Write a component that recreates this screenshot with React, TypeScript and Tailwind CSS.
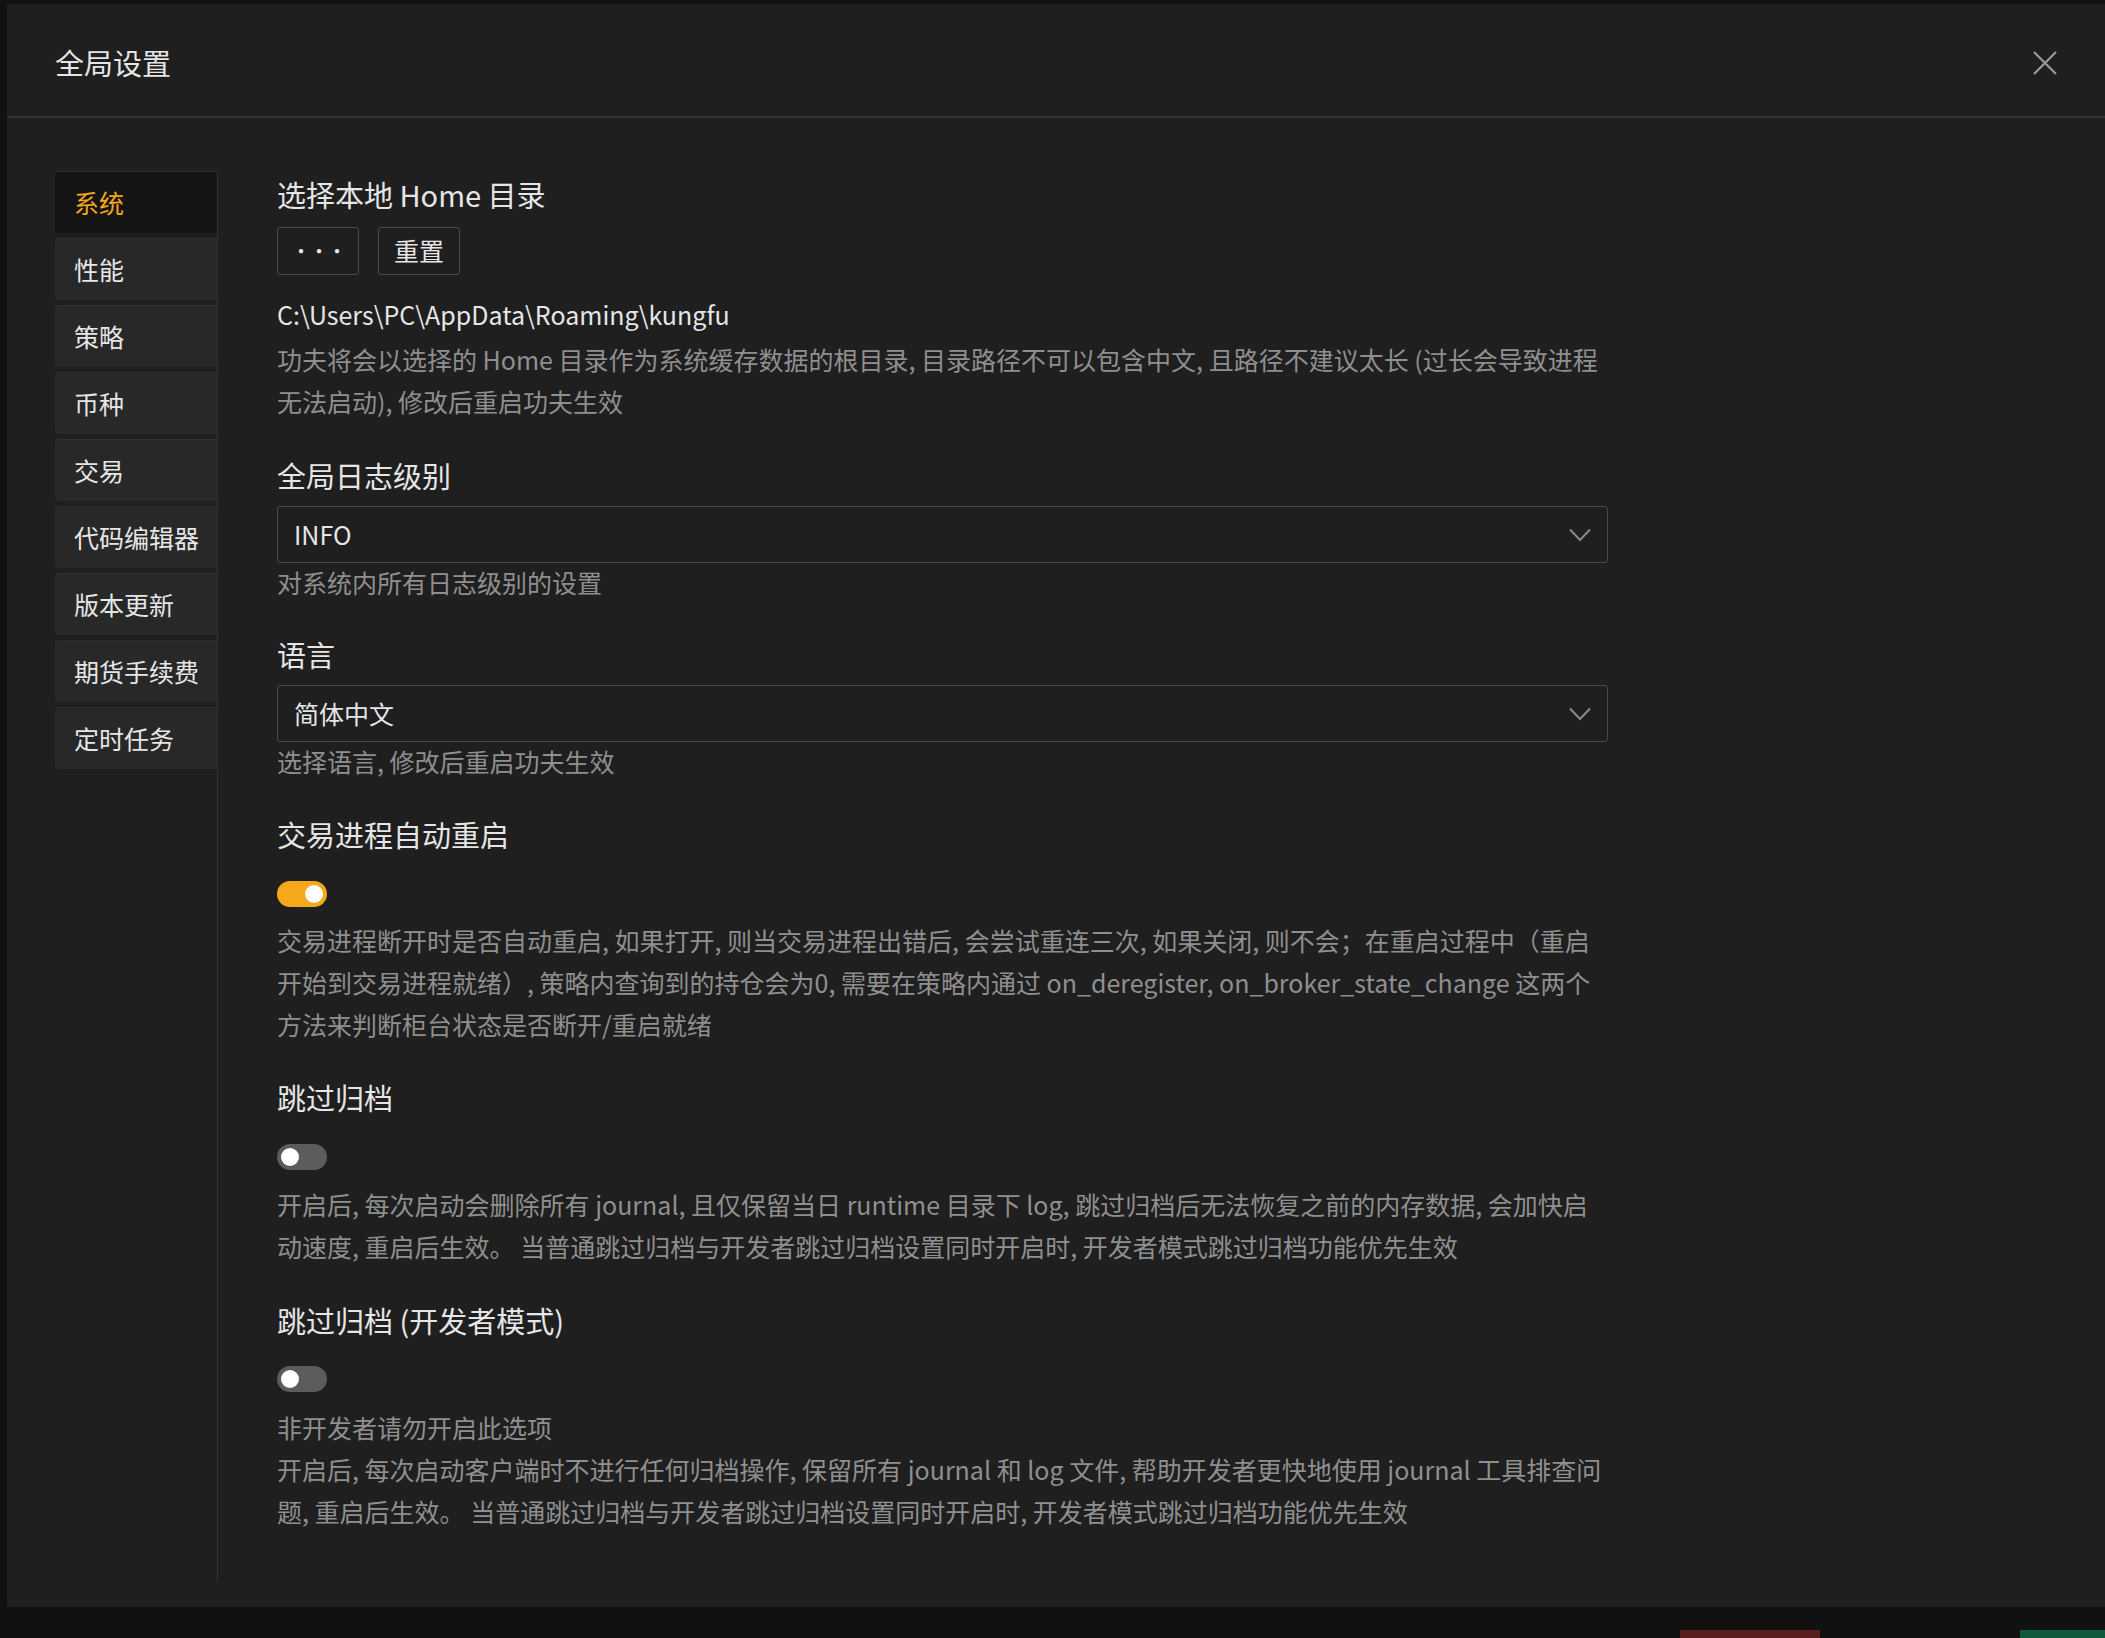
import React from "react";

const items = ["系统", "性能", "策略", "币种", "交易", "代码编辑器", "版本更新", "期货手续费", "定时任务"];

const H = ({ children, className = "" }: { children: React.ReactNode; className?: string }) => (
  <div className={"text-[29px] leading-[40px] text-[#e6e6e6] whitespace-nowrap " + className}>{children}</div>
);
const D = ({ lines, className = "" }: { lines: string[]; className?: string }) => (
  <div className={"text-[25px] leading-[42px] text-[#8f8f8f] " + className}>
    {lines.map((l, i) => (
      <div key={i} className="whitespace-nowrap">{l}</div>
    ))}
  </div>
);
const Toggle = ({ on, className = "" }: { on: boolean; className?: string }) => (
  <div className={"w-[50px] h-[26px] rounded-full flex items-center px-[4px] " + (on ? "bg-[#f5a81c] justify-end" : "bg-[#5c5c5c] justify-start") + " " + className}>
    <div className="w-[18px] h-[18px] rounded-full bg-white" />
  </div>
);
const Select = ({ value, className = "" }: { value: string; className?: string }) => (
  <div className={"h-[57px] w-[1331px] border border-[#4a4a4a] rounded-[3px] flex items-center justify-between pl-[16px] pr-[16px] text-[25px] text-[#e6e6e6] " + className}>
    <span>{value}</span>
    <svg width="22" height="14" viewBox="0 0 22 14" fill="none" stroke="#8a8a8a" strokeWidth="2">
      <path d="M1 1.5 L11 12 L21 1.5" />
    </svg>
  </div>
);

export default function App() {
  return (
    <div className="w-[2105px] h-[1638px] bg-[#111] overflow-hidden flex flex-col" style={{ fontFamily: '"Noto Sans CJK SC", "Noto Sans", sans-serif' }}>
      <div className="ml-[7px] mt-[4px] w-[2098px] h-[1603px] bg-[#1f1f1f] flex flex-col">
        <div className="h-[114px] border-b-2 border-[#333] flex items-center justify-between pl-[48px] pr-[47px] pt-[6px] shrink-0">
          <span className="text-[29px] text-[#e6e6e6]">全局设置</span>
          <svg width="26" height="26" viewBox="0 0 26 26" stroke="#9a9a9a" strokeWidth="2.2">
            <path d="M2 2 L24 24 M24 2 L2 24" />
          </svg>
        </div>
        <div className="flex pt-[53px]">
          <div className="ml-[48px] w-[163px] h-[1411px] border-r border-[#333] flex flex-col gap-[5px] shrink-0">
            {items.map((t, i) => (
              <div key={t} className={"h-[62px] flex items-center pl-[19px] text-[25px] rounded-l-[3px] border-t border-[#2e2e2e] " + (i === 0 ? "bg-[#141414] text-[#f5a81c]" : "bg-[#282828] text-[#e6e6e6]")}>
                {t}
              </div>
            ))}
          </div>
          <div className="ml-[59px] flex flex-col">
            <H className="mt-[3px]">选择本地 Home 目录</H>
            <div className="mt-[13px] flex gap-[19px]">
              <div className="w-[82px] h-[48px] border border-[#4a4a4a] rounded-[3px] flex items-center justify-center text-[20px] text-[#e6e6e6] tracking-[-2px]">···</div>
              <div className="w-[82px] h-[48px] border border-[#4a4a4a] rounded-[3px] flex items-center justify-center text-[25px] text-[#e6e6e6]">重置</div>
            </div>
            <div className="mt-[18px] text-[25px] leading-[42px] text-[#e6e6e6]">C:\Users\PC\AppData\Roaming\kungfu</div>
            <D className="mt-[3px]" lines={["功夫将会以选择的 Home 目录作为系统缓存数据的根目录, 目录路径不可以包含中文, 且路径不建议太长 (过长会导致进程", "无法启动), 修改后重启功夫生效"]} />
            <H className="mt-[33px]">全局日志级别</H>
            <Select className="mt-[11px]" value="INFO" />
            <D className="-mt-[2px]" lines={["对系统内所有日志级别的设置"]} />
            <H className="mt-[31px]">语言</H>
            <Select className="mt-[11px]" value="简体中文" />
            <D className="-mt-[2px]" lines={["选择语言, 修改后重启功夫生效"]} />
            <H className="mt-[32px]">交易进程自动重启</H>
            <Toggle on className="mt-[27px]" />
            <D className="mt-[12px]" lines={["交易进程断开时是否自动重启, 如果打开, 则当交易进程出错后, 会尝试重连三次, 如果关闭, 则不会；在重启过程中（重启", "开始到交易进程就绪）, 策略内查询到的持仓会为0, 需要在策略内通过 on_deregister, on_broker_state_change 这两个", "方法来判断柜台状态是否断开/重启就绪"]} />
            <H className="mt-[32px]">跳过归档</H>
            <Toggle on={false} className="mt-[27px]" />
            <D className="mt-[13px]" lines={["开启后, 每次启动会删除所有 journal, 且仅保留当日 runtime 目录下 log, 跳过归档后无法恢复之前的内存数据, 会加快启", "动速度, 重启后生效。 当普通跳过归档与开发者跳过归档设置同时开启时, 开发者模式跳过归档功能优先生效"]} />
            <H className="mt-[33px]">跳过归档 (开发者模式)</H>
            <Toggle on={false} className="mt-[26px]" />
            <D className="mt-[14px]" lines={["非开发者请勿开启此选项", "开启后, 每次启动客户端时不进行任何归档操作, 保留所有 journal 和 log 文件, 帮助开发者更快地使用 journal 工具排查问", "题, 重启后生效。 当普通跳过归档与开发者跳过归档设置同时开启时, 开发者模式跳过归档功能优先生效"]} />
          </div>
        </div>
      </div>
      <div className="flex-1 flex items-end">
        <div className="ml-[1680px] w-[140px] h-[8px] bg-[#5a1f1f]" />
        <div className="ml-[200px] w-[85px] h-[8px] bg-[#0f5a3a]" />
      </div>
    </div>
  );
}
